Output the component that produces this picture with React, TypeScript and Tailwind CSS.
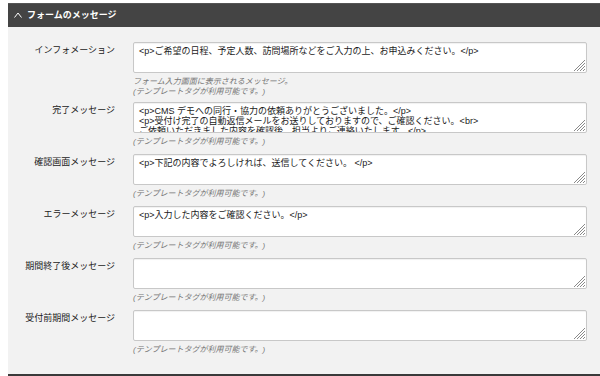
const font = {
  fontFamily: '"Liberation Sans", "Noto Sans CJK JP", sans-serif',
};

type Row = {
  label: string;
  value: string;
  help: string[];
};

const rows: Row[] = [
  {
    label: "インフォメーション",
    value: "<p>ご希望の日程、予定人数、訪問場所などをご入力の上、お申込みください。</p>",
    help: ["フォーム入力画面に表示されるメッセージ。", "(テンプレートタグが利用可能です。)"],
  },
  {
    label: "完了メッセージ",
    value:
      "<p>CMS デモへの同行・協力の依頼ありがとうございました。</p>\n<p>受付け完了の自動返信メールをお送りしておりますので、ご確認ください。<br>\nご依頼いただきました内容を確認後、担当よりご連絡いたします。</p>",
    help: ["(テンプレートタグが利用可能です。)"],
  },
  {
    label: "確認画面メッセージ",
    value: "<p>下記の内容でよろしければ、送信してください。 </p>",
    help: ["(テンプレートタグが利用可能です。)"],
  },
  {
    label: "エラーメッセージ",
    value: "<p>入力した内容をご確認ください。</p>",
    help: ["(テンプレートタグが利用可能です。)"],
  },
  {
    label: "期間終了後メッセージ",
    value: "",
    help: ["(テンプレートタグが利用可能です。)"],
  },
  {
    label: "受付前期間メッセージ",
    value: "",
    help: ["(テンプレートタグが利用可能です。)"],
  },
];

function Grip() {
  return (
    <svg
      className="absolute right-[2px] bottom-[2px] pointer-events-none"
      width="12"
      height="12"
      viewBox="0 0 12 12"
    >
      <g stroke="#8a8a8a" strokeWidth="1">
        <line x1="12" y1="1" x2="1" y2="12" />
        <line x1="12" y1="4" x2="4" y2="12" />
        <line x1="12" y1="7" x2="7" y2="12" />
        <line x1="12" y1="10" x2="10" y2="12" />
      </g>
    </svg>
  );
}

function MessageRow({ row, last }: { row: Row; last: boolean }) {
  return (
    <div className={`flex ${last ? "" : row.help.length > 1 ? "mb-[5px]" : "mb-[7px]"}`}>
      <div className="w-[125px] shrink-0 pr-[18px] pt-[2px] text-right text-[9px] leading-[12px] text-[#222]">
        {row.label}
      </div>
      <div className="w-[454px]">
        <div className="relative">
          <textarea
            readOnly
            defaultValue={row.value}
            style={font}
            className="block w-[454px] h-[31px] resize-none overflow-hidden rounded-[2px] border border-[#c8c8c8] bg-white pl-[5px] pr-[5px] pt-[3px] text-[9px] leading-[10px] text-[#1a1a1a] outline-none shadow-[inset_0_1px_1px_rgba(0,0,0,0.06)]"
          />
          <Grip />
        </div>
        <div className="mt-[4px] text-[8px] leading-[10px] italic text-[#777]">
          {row.help.map((h) => (
            <div key={h}>{h}</div>
          ))}
        </div>
      </div>
    </div>
  );
}

export default function App() {
  return (
    <div style={font} className="w-[600px] h-[376px] overflow-hidden bg-white pt-[3px] pl-[8px]">
      <div className="h-[24px] bg-[#444444] border-t border-[#555] flex items-center pl-[6px] gap-[5px] text-white">
        <svg width="8" height="6" viewBox="0 0 8 6" className="mt-[-1px]">
          <polyline points="0.5,5.5 4,1 7.5,5.5" fill="none" stroke="#fff" strokeWidth="1" />
        </svg>
        <span className="text-[9px] font-bold leading-none">フォームのメッセージ</span>
      </div>
      <div className="h-[349px] bg-[#f2f2f2] pt-[15px] border-b-2 border-[#3a3a3a]">
        {rows.map((r, i) => (
          <MessageRow key={r.label} row={r} last={i === rows.length - 1} />
        ))}
      </div>
    </div>
  );
}
